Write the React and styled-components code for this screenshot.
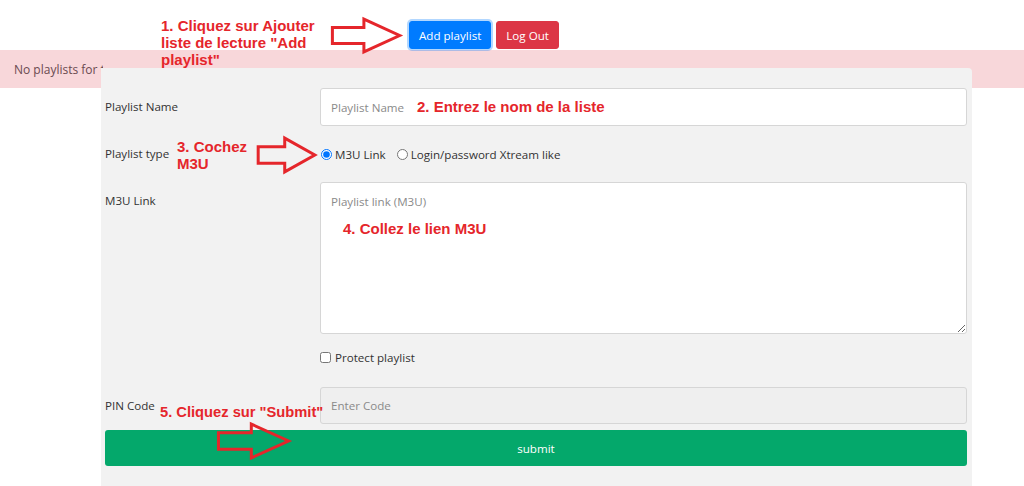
import styled, { createGlobalStyle } from "styled-components";

const GlobalStyle = createGlobalStyle`
  * { box-sizing: border-box; }
  html, body { margin: 0; padding: 0; background: #fff; }
  body {
    font-family: "Open Sans", "Noto Sans", sans-serif;
    font-size: 11.6px;
    color: #333;
  }
`;

const Page = styled.div`
  position: relative;
  width: 1024px;
  height: 486px;
  overflow: hidden;
`;

const TopBar = styled.div`
  display: flex;
  gap: 5px;
  height: 50px;
  padding: 21px 0 0 409px;
`;

const Btn = styled.button`
  height: 28px;
  padding: 0 9px;
  border: 1px solid ${(p) => p.$bg};
  border-radius: 3px;
  background: ${(p) => p.$bg};
  color: #fff;
  font-family: inherit;
  font-size: 11.6px;
  box-shadow: ${(p) => (p.$focus ? "0 0 0 2px rgba(0, 123, 255, 0.3)" : "none")};
`;

const Alert = styled.div`
  height: 38px;
  padding: 0 14px;
  display: flex;
  align-items: center;
  background: #f8d7da;
  color: #6a4a50;
  font-size: 12px;
`;

const AlertText = styled.span`
  display: block;
  max-width: 89px;
  overflow: hidden;
  white-space: nowrap;
`;

const Panel = styled.div`
  position: absolute;
  left: 101px;
  top: 68px;
  width: 871px;
  bottom: 0;
  background: #f2f2f2;
  border-top-right-radius: 4px;
  padding: 20px 5px 0 4px;
`;

const Row = styled.div`
  display: grid;
  grid-template-columns: 215px 1fr;
  align-items: start;
  margin-top: ${(p) => p.$mt || 0}px;
  margin-bottom: ${(p) => p.$mb || 0}px;
`;

const Label = styled.label`
  padding-top: ${(p) => (p.$inline ? 3 : 10)}px;
  line-height: 18px;
  color: #333;
`;

const TextInput = styled.input`
  width: 100%;
  height: ${(p) => p.$h || 38}px;
  border: 1px solid #d6d6d6;
  border-radius: 3px;
  padding: 0 10px;
  font-family: inherit;
  font-size: 11.6px;
  background: ${(p) => (p.disabled ? "#efefef" : "#fff")};
  &::placeholder { color: #8a8a8a; }
`;

const TextArea = styled.textarea`
  display: block;
  width: 100%;
  height: 152px;
  border: 1px solid #d6d6d6;
  border-radius: 3px;
  padding: 11px 10px;
  font-family: inherit;
  font-size: 11.6px;
  resize: vertical;
  &::placeholder { color: #8a8a8a; }
`;

const Options = styled.div`
  display: flex;
  align-items: center;
  height: 24px;
  gap: 10px;
`;

const Option = styled.label`
  display: flex;
  align-items: center;
  gap: 3px;
  color: #333;
  input { margin: 0 0 0 1px; width: 11px; height: 11px; }
`;

const CheckRow = styled.div`
  grid-column: 2;
  display: flex;
  align-items: center;
  height: 20px;
  gap: 4px;
  input { margin: 0; width: 11px; height: 11px; }
`;

const Submit = styled.button`
  display: block;
  width: 100%;
  height: 36px;
  margin-top: 6px;
  border: none;
  border-radius: 3px;
  background: #04a86b;
  color: #fff;
  font-family: inherit;
  font-size: 11.6px;
`;

const Note = styled.div`
  position: absolute;
  left: ${(p) => p.$x}px;
  top: ${(p) => p.$y}px;
  font-family: "Liberation Sans", Arial, sans-serif;
  font-weight: bold;
  font-size: ${(p) => p.$size || 15}px;
  line-height: 17px;
  color: #e5262b;
  white-space: nowrap;
  z-index: 2;
`;

const ArrowSvg = styled.svg`
  position: absolute;
  left: ${(p) => p.$x}px;
  top: ${(p) => p.$y}px;
  overflow: visible;
  z-index: 2;
`;

function Arrow({ x, y, w, h }) {
  return (
    <ArrowSvg $x={x} $y={y} width={w} height={h} viewBox="0 0 100 100" preserveAspectRatio="none">
      <polygon
        points="2,27 47,27 47,3 98,50 47,97 47,73 2,73"
        fill="none"
        stroke="#e5262b"
        strokeWidth="3"
        strokeLinejoin="miter"
        vectorEffect="non-scaling-stroke"
      />
    </ArrowSvg>
  );
}

export default function App() {
  return (
    <Page>
      <GlobalStyle />
      <TopBar>
        <Btn $bg="#007bff" $focus>Add playlist</Btn>
        <Btn $bg="#dc3545">Log Out</Btn>
      </TopBar>
      <Alert>
        <AlertText>No playlists for this account</AlertText>
      </Alert>

      <Panel>
        <Row $mb={16}>
          <Label>Playlist Name</Label>
          <TextInput placeholder="Playlist Name" />
        </Row>
        <Row $mb={16}>
          <Label $inline>Playlist type</Label>
          <Options>
            <Option>
              <input type="radio" name="type" defaultChecked /> M3U Link
            </Option>
            <Option>
              <input type="radio" name="type" /> Login/password Xtream like
            </Option>
          </Options>
        </Row>
        <Row>
          <Label>M3U Link</Label>
          <TextArea placeholder="Playlist link (M3U)" />
        </Row>
        <Row $mt={13} $mb={20}>
          <CheckRow>
            <input type="checkbox" /> Protect playlist
          </CheckRow>
        </Row>
        <Row>
          <Label>PIN Code</Label>
          <TextInput $h={37} placeholder="Enter Code" disabled />
        </Row>
        <Submit>submit</Submit>
      </Panel>

      <Note $x={161} $y={17}>
        1. Cliquez sur Ajouter
        <br />
        liste de lecture "Add
        <br />
        playlist"
      </Note>
      <Arrow x={331} y={18} w={70} h={35} />

      <Note $x={417} $y={98}>2. Entrez le nom de la liste</Note>

      <Note $x={177} $y={138}>
        3. Cochez
        <br />
        M3U
      </Note>
      <Arrow x={257} y={137} w={59} h={36} />

      <Note $x={343} $y={220}>4. Collez le lien M3U</Note>

      <Note $x={160} $y={404} $size={14.7}>5. Cliquez sur "Submit"</Note>
      <Arrow x={217} y={423} w={73} h={36} />
    </Page>
  );
}
